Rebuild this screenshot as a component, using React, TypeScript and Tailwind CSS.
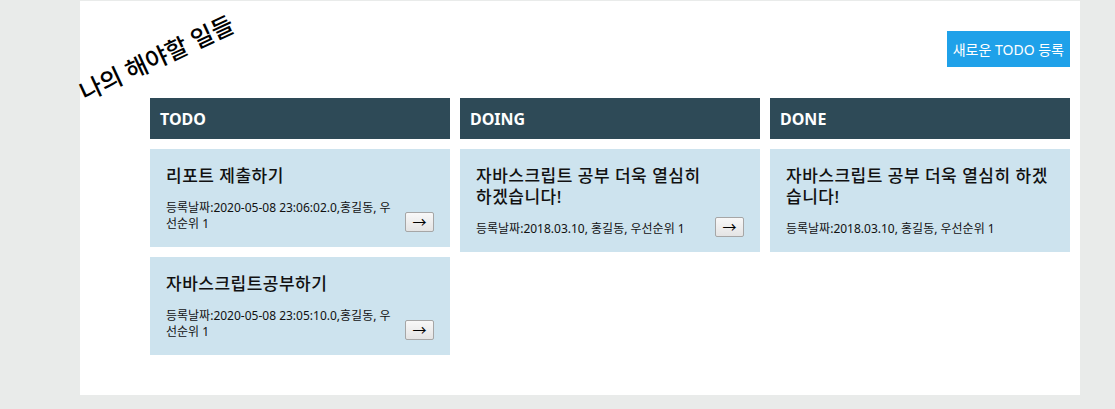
import React from "react";

interface Todo {
  title: string;
  info: string;
}

interface Column {
  name: string;
  items: Todo[];
  movable: boolean;
}

const columns: Column[] = [
  {
    name: "TODO",
    movable: true,
    items: [
      { title: "리포트 제출하기", info: "등록날짜:2020-05-08 23:06:02.0,홍길동, 우선순위 1" },
      { title: "자바스크립트공부하기", info: "등록날짜:2020-05-08 23:05:10.0,홍길동, 우선순위 1" },
    ],
  },
  {
    name: "DOING",
    movable: true,
    items: [
      { title: "자바스크립트 공부 더욱 열심히 하겠습니다!", info: "등록날짜:2018.03.10, 홍길동, 우선순위 1" },
    ],
  },
  {
    name: "DONE",
    movable: false,
    items: [
      { title: "자바스크립트 공부 더욱 열심히 하겠습니다!", info: "등록날짜:2018.03.10, 홍길동, 우선순위 1" },
    ],
  },
];

function Card({ todo, movable }: { todo: Todo; movable: boolean }) {
  return (
    <li className="flex items-end gap-[10px] bg-[#cde3ee] px-4 pt-4 pb-[15px] text-[#111]">
      <div className="min-w-0 flex-1">
        <h3 className="text-[17px] leading-[21px] font-medium tracking-[0.5px]">{todo.title}</h3>
        <p className="mt-[14px] text-[12px] leading-4">{todo.info}</p>
      </div>
      {movable && (
        <button
          type="button"
          className="flex h-[20px] w-[29px] shrink-0 items-center justify-center rounded-[2px] border border-[#a6a6a6] bg-gradient-to-b from-[#f8f8f8] to-[#e4e4e4] text-[14px] leading-none text-black"
        >
          →
        </button>
      )}
    </li>
  );
}

export default function App() {
  return (
    <div
      className="min-h-screen bg-[#e9ebea] pt-px pb-[14px]"
      style={{ fontFamily: '"Noto Sans", "Noto Sans CJK KR", sans-serif' }}
    >
      <main className="ml-[80px] h-[394px] w-[1000px] bg-white">
        <header className="flex h-[97px] items-start justify-between">
          <h1 className="mt-[45px] ml-[-7px] w-max -rotate-[25deg] text-[24px] leading-[24px] font-medium whitespace-nowrap text-black">
            나의 해야할 일들
          </h1>
          <button
            type="button"
            className="mt-[30px] mr-[10px] h-[36px] bg-[#1fa1e9] px-[6px] text-[14px] text-white"
          >
            새로운 TODO 등록
          </button>
        </header>

        <section className="flex gap-[10px] pr-[10px] pl-[70px]">
          {columns.map((col) => (
            <div key={col.name} className="flex w-[300px] flex-col gap-[10px]">
              <h2 className="flex h-[41px] items-center bg-[#2e4a57] px-[10px] text-[16px] font-bold text-white">
                {col.name}
              </h2>
              <ul className="flex flex-col gap-[10px]">
                {col.items.map((todo, i) => (
                  <Card key={i} todo={todo} movable={col.movable} />
                ))}
              </ul>
            </div>
          ))}
        </section>
      </main>
    </div>
  );
}
